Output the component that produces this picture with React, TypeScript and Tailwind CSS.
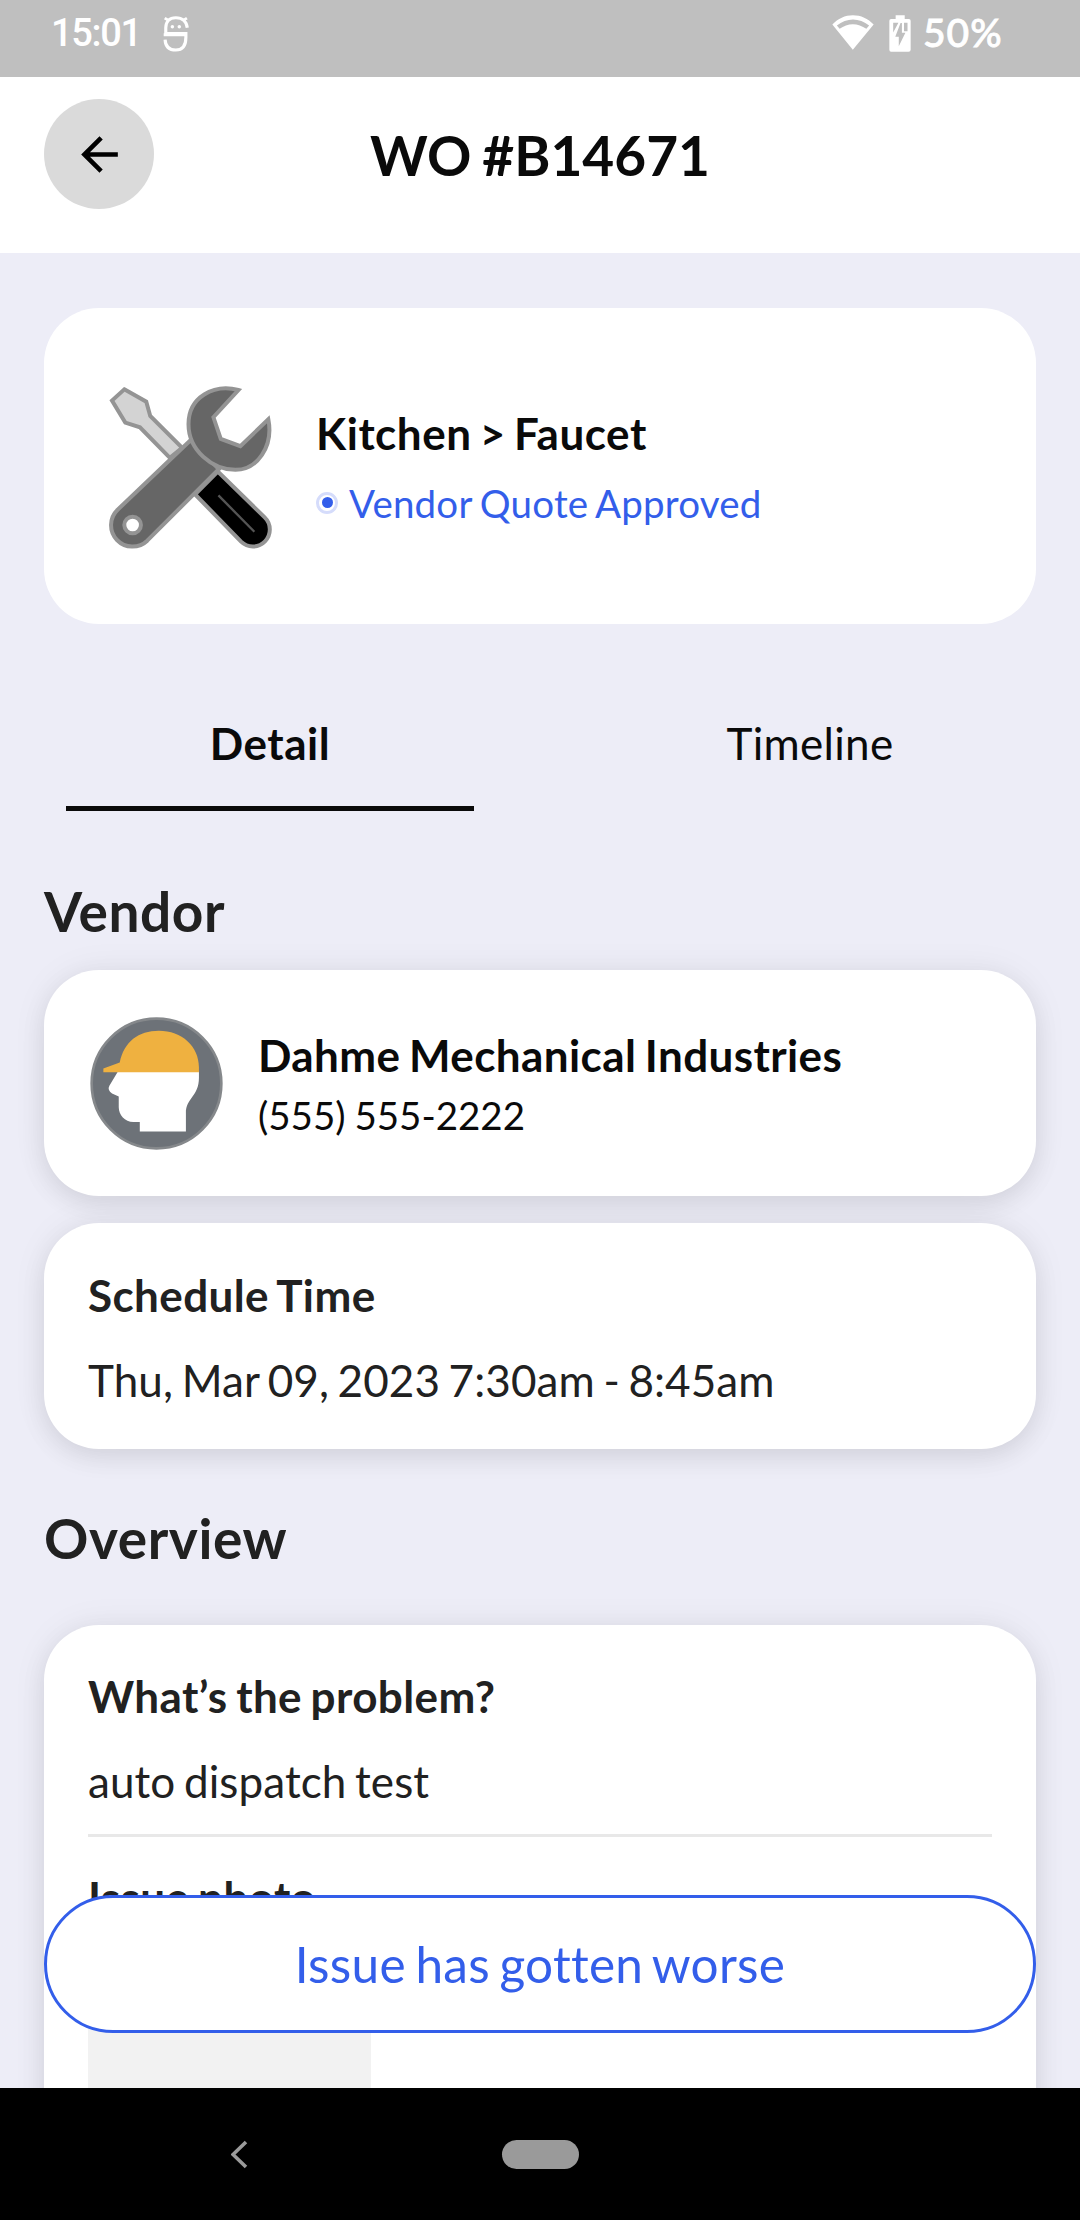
import { useState } from 'react';
import type { ReactNode } from 'react';
import clsx from 'clsx';

const StatusBar = () => (
  <div className="flex h-[77px] items-start bg-[#bfbfbf] pl-[51px] pt-3 font-['Roboto',sans-serif] text-[38px] font-medium leading-[42px] text-white">
    <span className="w-[112px] tracking-[-1.3px]">15:01</span>
    <svg className="mt-[4px] h-[36px] w-[26px]" viewBox="475 47 75 107" preserveAspectRatio="none" fill="none">
      <path d="M545 82C543 64 531 52 512 52C493 52 483 64 483 82V99H541V110C541 134 531 148 512 148C493 148 482 137 481 117M477 103H541" stroke="#fff" strokeWidth="9" />
      <path d="M480 53L492 61M544 53L532 61" stroke="#fff" strokeWidth="8" />
      <circle cx="502" cy="79" r="5" fill="#fff" />
      <circle cx="522" cy="79" r="5" fill="#fff" />
    </svg>
    <svg className="ml-[643px] mt-[3px] h-[35px] w-[42px]" viewBox="847 44 121 106" preserveAspectRatio="none">
      <path fill="#fff" fillRule="evenodd" d="M848 73C864 55 885 45 907 45C930 45 951 55 967 73L907 149ZM861 76L869 86C892 67 922 67 946 86L954 76C926 51 889 51 861 76Z" />
    </svg>
    <svg className="ml-[15px] mt-[3px] h-[37px] w-[22px]" viewBox="1015 44 63 110" preserveAspectRatio="none">
      <path fill="#fff" d="M1034 45H1060V56H1072Q1077 56 1077 61V147Q1077 153 1071 153H1021Q1016 153 1016 147V61Q1016 56 1021 56H1034Z" />
      <path fill="#bfbfbf" d="M1027 67H1042L1027 96ZM1048 68H1052V97H1062L1043 137V109H1033ZM1058 67H1068V92H1058Z" />
    </svg>
    <span className="-mt-px ml-[12px] font-['Lato',sans-serif] text-[39px] tracking-[1px] [-webkit-text-stroke:0.8px_white]">
      50%
    </span>
  </div>
);

const Header = ({ title }: { title: string }) => (
  <header className="grid h-[176px] grid-cols-[110px_1fr_110px] bg-white px-11 pt-[22px]">
    <button className="flex h-[110px] w-[110px] items-center justify-center rounded-full bg-[#dadada]">
      <svg className="h-[55px] w-[55px]" viewBox="0 0 24 24">
        <path d="M20 11H7.83l5.59-5.59L12 4l-8 8 8 8 1.41-1.41L7.83 13H20v-2z" />
      </svg>
    </button>
    <h1 className="mt-[23px] text-center text-[55px] font-bold leading-[66px] text-[#0a0a0a] [word-spacing:-2.5px]">
      {title}
    </h1>
  </header>
);

const ToolsIcon = () => (
  <svg className="mt-[2px] h-[163px] w-[163px] shrink-0" viewBox="206 257 488 490" stroke="#949494" strokeWidth="12">
    {/* screwdriver */}
    <path fill="#d3d3d3" d="M251 267L317 304L329 347L425 443L388 473L298 381L254 367L214 301Z" />
    <path fill="#000" d="M532 514L673 652A50 50 0 0 1 602 725L464 583Z" />
    <path d="M534 586L642 695" fill="none" strokeWidth="7" stroke="#555" />
    {/* wrench */}
    <path fill="#666" d="M450 420L231 629A64 64 0 0 0 320 722L535 507Z" />
    <path fill="#666" d="M594 269C520 250 444 290 444 372C444 450 515 509 585 509C650 509 700 440 684 357L600 438L541 416L519 351Z" />
    <circle cx="276" cy="675" r="25" fill="#fff" />
  </svg>
);

const VendorIcon = () => (
  <svg className="h-[133px] w-[133px] shrink-0" viewBox="151 170 398 398">
    <circle cx="350" cy="369" r="194" fill="#6d7278" stroke="#85888b" strokeWidth="8" />
    <path fill="#fff" d="M235 332H477V352C477 408 438 412 438 458V513H300V484H281C255 484 237 463 237 440V408L217 399Q202 389 209 376Z" />
    <path fill="#efb140" d="M191 335V324L240 306C253 244 296 211 357 211C426 211 477 258 477 320V335Z" />
  </svg>
);

const Card = ({ className, children }: { className?: string; children: ReactNode }) => (
  <div
    className={clsx(
      'rounded-[55px] bg-white shadow-[0_0_36px_rgba(0,0,0,0.06),0_9px_26px_rgba(0,0,0,0.08)]',
      className
    )}
  >
    {children}
  </div>
);

const FieldLabel = ({ children }: { children: ReactNode }) => (
  <h3 className="text-[44px] font-bold leading-[52px] tracking-[0.4px] [word-spacing:-2.5px]">{children}</h3>
);

const Field = ({ label, value }: { label: string; value: string }) => (
  <>
    <FieldLabel>{label}</FieldLabel>
    <p className="mt-[33px] text-[44px] leading-[52px] tracking-[0.1px] [word-spacing:-2.8px]">{value}</p>
  </>
);

const tabs = ['Detail', 'Timeline'];

const App = () => {
  const [activeTab, setActiveTab] = useState('Detail');

  return (
    <div className="flex h-[2220px] w-[1080px] flex-col overflow-hidden bg-[#ededf7] font-['Lato',sans-serif] text-[#212121]">
      <StatusBar />
      <Header title="WO #B14671" />

      <main className="relative min-h-0 flex-1 overflow-hidden px-11 pt-[55px]">
        <section className="flex h-[316px] items-center gap-[44px] rounded-[55px] bg-white pl-[65px]">
          <ToolsIcon />
          <div>
            <h2 className="text-[44px] font-bold leading-[52px] tracking-[0.53px] text-[#0a0a0a] [word-spacing:-3px]">
              Kitchen &gt; Faucet
            </h2>
            <div className="mt-[21px] flex items-center gap-[11px]">
              <span className="flex h-[22px] w-[22px] items-center justify-center rounded-full border-[3px] border-[#d5dcfb]">
                <span className="h-[11px] w-[11px] rounded-full bg-[#335eea]" />
              </span>
              <span className="text-[38.5px] leading-[46px] tracking-[0.2px] text-[#335eea] [word-spacing:-2px]">
                Vendor Quote Approved
              </span>
            </div>
          </div>
        </section>

        <nav className="-mx-11 mt-[93px] grid grid-cols-2 text-[44px] leading-[52px] text-[#0a0a0a]">
          {tabs.map((tab) => (
            <button key={tab} onClick={() => setActiveTab(tab)} className="px-[66px]">
              <span className={clsx('block', activeTab === tab ? 'font-bold tracking-[0.53px]' : 'tracking-[0.3px]')}>
                {tab}
              </span>
              <span
                className={clsx('mt-[36.5px] block h-[5.5px]', activeTab === tab ? 'bg-[#0a0a0a]' : 'bg-transparent')}
              />
            </button>
          ))}
        </nav>

        <h2 className="mt-[67px] text-[55px] font-bold leading-[66px] tracking-[0.6px]">Vendor</h2>
        <Card className="mt-[26px] flex h-[226px] items-center gap-[35px] pl-[46px]">
          <VendorIcon />
          <div className="text-[#0a0a0a]">
            <FieldLabel>Dahme Mechanical Industries</FieldLabel>
            <p className="mt-[11px] text-[38.5px] leading-[46px] [word-spacing:-1px]">(555) 555-2222</p>
          </div>
        </Card>
        <Card className="mt-[27px] h-[226px] px-11 pt-[46px]">
          <Field label="Schedule Time" value="Thu, Mar 09, 2023 7:30am - 8:45am" />
        </Card>

        <h2 className="mt-[56px] text-[55px] font-bold leading-[66px] tracking-[0.6px]">Overview</h2>
        <Card className="mt-[54px] h-[700px] px-11 pt-[45px]">
          <Field label="What’s the problem?" value="auto dispatch test" />
          <div className="mt-[27px] h-[3px] bg-[#e8e8e8]" />
          <div className="mt-[34px]">
            <FieldLabel>Issue photo</FieldLabel>
          </div>
          <div className="mt-[33px] h-[283px] w-[283px] bg-[#f2f2f2]" />
        </Card>

        <button className="absolute bottom-[55px] left-11 right-11 h-[138px] rounded-full border-[3px] border-[#335eea] bg-white text-[49.5px] leading-[60px] tracking-[0.3px] text-[#335eea] [word-spacing:-3.5px]">
          Issue has gotten worse
        </button>
      </main>

      <footer className="flex h-[132px] items-start bg-black pl-[231px] pt-[52px]">
        <svg className="h-[29px] w-[17px]" viewBox="0 0 17 29" fill="none">
          <path d="M15 2L2 14.5L15 27" stroke="#9a9a9a" strokeWidth="3.6" />
        </svg>
        <span className="ml-[254px] h-[29px] w-[77px] rounded-full bg-[#9a9a9a]" />
      </footer>
    </div>
  );
};

export default App;
